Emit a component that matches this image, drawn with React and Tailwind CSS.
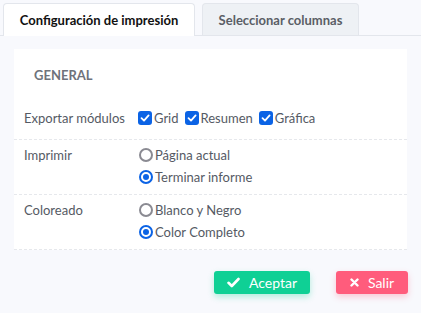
import React, { useState } from 'react';

const Check = ({ checked }) => (
  <span className={`w-[14px] h-[14px] rounded-[3px] flex items-center justify-center ${checked ? 'bg-[#0b63e5]' : 'border border-gray-400 bg-white'}`}>
    {checked && (
      <svg width="10" height="10" viewBox="0 0 10 10">
        <path d="M1.5 5.2 L4 7.6 L8.6 2.4" fill="none" stroke="white" strokeWidth="1.8" strokeLinecap="round" strokeLinejoin="round" />
      </svg>
    )}
  </span>
);

const Radio = ({ checked }) => (
  <span className={`w-[14px] h-[14px] rounded-full flex items-center justify-center border-2 ${checked ? 'border-[#0b63e5]' : 'border-[#8a8a92]'}`}>
    {checked && <span className="w-[6px] h-[6px] rounded-full bg-[#0b63e5]" />}
  </span>
);

const App = () => {
  const [mods, setMods] = useState({ Grid: true, Resumen: true, 'Gráfica': true });
  const [print, setPrint] = useState('Terminar informe');
  const [color, setColor] = useState('Color Completo');

  const rows = [
    { label: 'Imprimir', options: ['Página actual', 'Terminar informe'], value: print, set: setPrint },
    { label: 'Coloreado', options: ['Blanco y Negro', 'Color Completo'], value: color, set: setColor }
  ];

  return (
    <div className="w-[421px] h-[313px] bg-[#f8f9fd] text-[13px] leading-[16px] text-[#555a64]" style={{ fontFamily: 'Lato, sans-serif' }}>
      <div className="flex items-end gap-[7px] px-[3px] pt-[3px] border-b border-[#e3e6ec] h-[36px]">
        <div className="w-[192px] h-[33px] bg-white border border-b-0 border-[#e3e6ec] rounded-t-[4px] flex items-center justify-center font-bold text-[13px] text-[#111] mb-[-1px]">
          Configuración de impresión
        </div>
        <div className="w-[157px] h-[32px] bg-[#eef1f5] border border-b-0 border-[#e3e6ec] rounded-t-[4px] flex items-center justify-center font-bold text-[13px] text-[#5a5e66]">
          Seleccionar columnas
        </div>
      </div>

      <div className="mx-[14px] mt-[13px] bg-white">
        <div className="pl-[20px] pt-[18px] pb-[27px] font-bold text-[13px] text-[#6e727b]">GENERAL</div>

        <div className="flex items-start pl-[10px] pb-[13px] border-b border-dashed border-[#e6e8ec]">
          <div className="w-[114px]">Exportar módulos</div>
          <div className="flex items-center gap-[6px]">
            {Object.keys(mods).map((k) => (
              <label key={k} className="flex items-center gap-[2px] cursor-pointer" onClick={() => setMods({ ...mods, [k]: !mods[k] })}>
                <Check checked={mods[k]} />
                <span>{k}</span>
              </label>
            ))}
          </div>
        </div>

        {rows.map((r) => (
          <div key={r.label} className="flex items-start pl-[10px] pt-[7px] pb-[9px] border-b border-dashed border-[#e6e8ec]">
            <div className="w-[115px]">{r.label}</div>
            <div className="flex flex-col gap-[6px]">
              {r.options.map((o) => (
                <label key={o} className="flex items-center gap-[2px] cursor-pointer" onClick={() => r.set(o)}>
                  <Radio checked={r.value === o} />
                  <span>{o}</span>
                </label>
              ))}
            </div>
          </div>
        ))}
      </div>

      <div className="flex justify-end gap-[26px] pr-[13px] mt-[21px]">
        <button className="w-[96px] h-[23px] rounded-[3px] bg-[#0fd095] text-white text-[14px] flex items-center justify-center gap-[9px] shadow-[0_3px_6px_rgba(15,208,149,0.3)]">
          <svg width="13" height="11" viewBox="0 0 13 11">
            <path d="M1.5 5.8 L4.8 9 L11.5 2" fill="none" stroke="white" strokeWidth="2.6" strokeLinecap="round" strokeLinejoin="round" />
          </svg>
          Aceptar
        </button>
        <button className="w-[72px] h-[23px] rounded-[3px] bg-[#ff5c7c] text-white text-[14px] flex items-center justify-center gap-[9px] shadow-[0_3px_6px_rgba(255,92,124,0.3)]">
          <svg width="9" height="9" viewBox="0 0 9 9">
            <path d="M1.5 1.5 L7.5 7.5 M7.5 1.5 L1.5 7.5" fill="none" stroke="white" strokeWidth="2.4" strokeLinecap="round" />
          </svg>
          Salir
        </button>
      </div>
    </div>
  );
};

export default App;
